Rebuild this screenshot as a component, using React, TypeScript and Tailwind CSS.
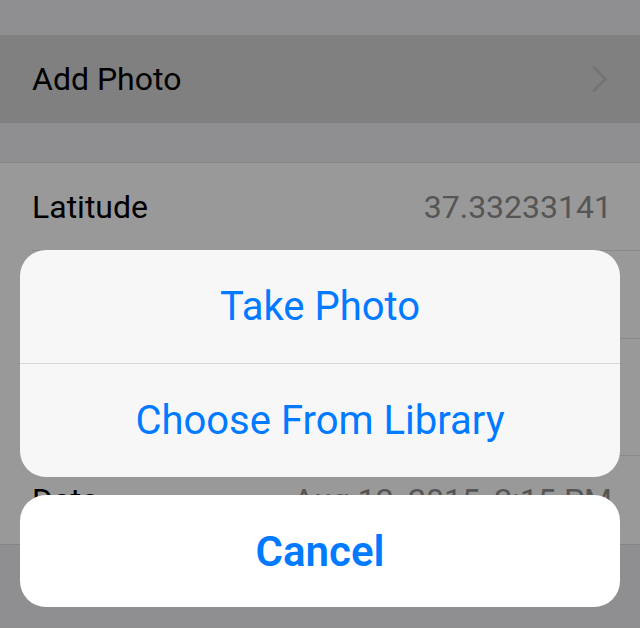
const font = { fontFamily: "Roboto, 'Liberation Sans', sans-serif" };

function Row({ label, value, last }: { label: string; value?: string; last?: boolean }) {
  return (
    <div className="h-[88px] pl-8 bg-[#999999]">
      <div className={`h-full flex items-center justify-between pr-7 ${last ? "" : "border-b border-[#8a8a8a]"}`}>
        <span className="text-[32px] text-black">{label}</span>
        {value && <span className="text-[32px] text-[#555555]">{value}</span>}
      </div>
    </div>
  );
}

export default function App() {
  return (
    <div className="relative w-[640px] h-[628px] overflow-hidden bg-[#8f8f91]" style={font}>
      {/* Dimmed settings table */}
      <div className="pt-[35px]">
        <div className="h-[88px] bg-[#808080] flex items-center justify-between pl-8 pr-[32px]">
          <span className="text-[32px] text-black">Add Photo</span>
          <svg width="16" height="26" viewBox="0 0 16 26" fill="none">
            <path d="M2 1.5 L13.5 13 L2 24.5" stroke="#747474" strokeWidth="3" strokeLinecap="round" strokeLinejoin="round" />
          </svg>
        </div>
        <div className="h-10 border-b border-[#858585]" />
        <Row label="Latitude" value="37.33233141" />
        <Row label="Longitude" value="-122.03121860" />
        <div className="h-[117px] pl-8 bg-[#999999]">
          <div className="h-full border-b border-[#8a8a8a]" />
        </div>
        <Row label="Date" value="Aug 12, 2015, 2:15 PM" last />
        <div className="border-t border-[#858585]" />
      </div>

      {/* Action sheet */}
      <div className="absolute left-5 right-5 top-[250px] flex flex-col gap-[18px]">
        <div className="rounded-[26px] bg-[#f7f7f7] overflow-hidden">
          <button className="w-full h-[114px] flex items-center justify-center text-[40px] text-[#007aff] border-b border-[#d6d6da]">
            Take Photo
          </button>
          <button className="w-full h-[113px] flex items-center justify-center text-[40px] text-[#007aff]">
            Choose From Library
          </button>
        </div>
        <button className="w-full h-[112px] rounded-[26px] bg-white flex items-center justify-center text-[42px] font-semibold text-[#007aff]">
          Cancel
        </button>
      </div>
    </div>
  );
}
